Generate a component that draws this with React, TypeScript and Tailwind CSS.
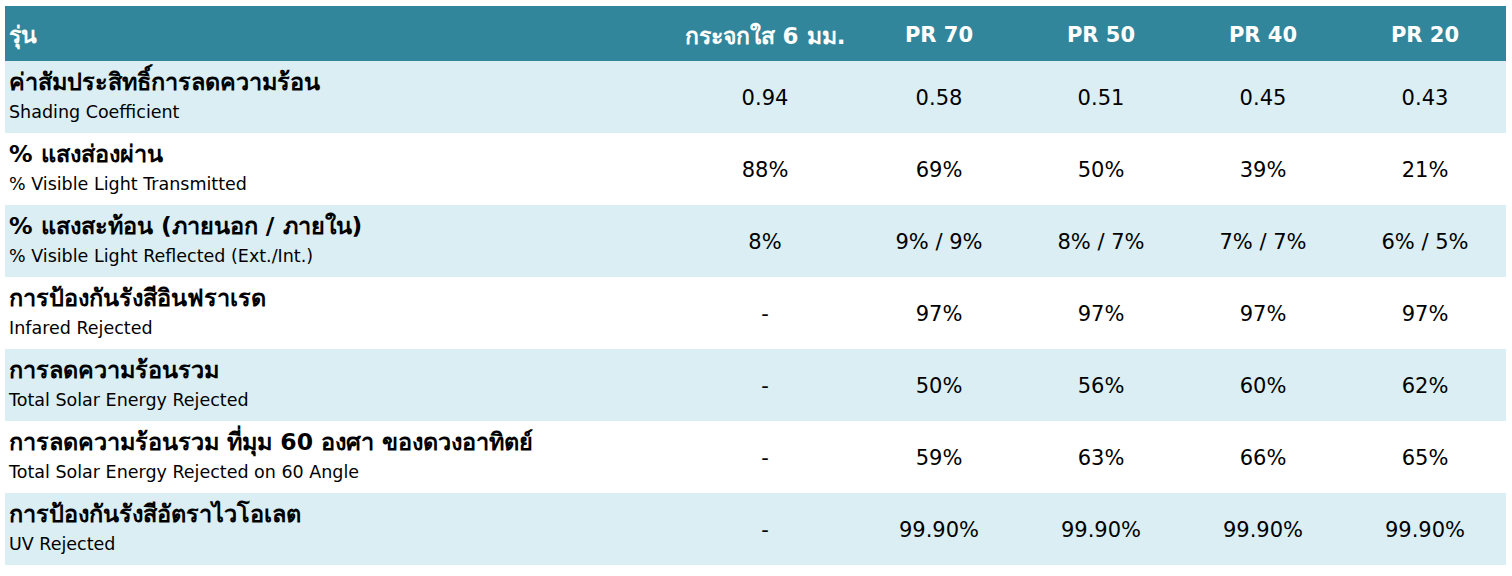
const FONT = "font-['DejaVu_Sans','Noto_Sans',Tahoma,sans-serif]";

const HEADERS = ["กระจกใส 6 มม.", "PR 70", "PR 50", "PR 40", "PR 20"];

const ROWS: { th: string; en: string; values: string[] }[] = [
  {
    th: "ค่าสัมประสิทธิ์การลดความร้อน",
    en: "Shading Coefficient",
    values: ["0.94", "0.58", "0.51", "0.45", "0.43"],
  },
  {
    th: "% แสงส่องผ่าน",
    en: "% Visible Light Transmitted",
    values: ["88%", "69%", "50%", "39%", "21%"],
  },
  {
    th: "% แสงสะท้อน (ภายนอก / ภายใน)",
    en: "% Visible Light Reflected (Ext./Int.)",
    values: ["8%", "9% / 9%", "8% / 7%", "7% / 7%", "6% / 5%"],
  },
  {
    th: "การป้องกันรังสีอินฟราเรด",
    en: "Infared Rejected",
    values: ["-", "97%", "97%", "97%", "97%"],
  },
  {
    th: "การลดความร้อนรวม",
    en: "Total Solar Energy Rejected",
    values: ["-", "50%", "56%", "60%", "62%"],
  },
  {
    th: "การลดความร้อนรวม ที่มุม 60 องศา ของดวงอาทิตย์",
    en: "Total Solar Energy Rejected on 60 Angle",
    values: ["-", "59%", "63%", "66%", "65%"],
  },
  {
    th: "การป้องกันรังสีอัตราไวโอเลต",
    en: "UV Rejected",
    values: ["-", "99.90%", "99.90%", "99.90%", "99.90%"],
  },
];

export default function App() {
  return (
    <div className={`min-h-screen w-full bg-white px-[5px] pt-[6px] text-black ${FONT}`}>
      <div className="grid w-[1501px] grid-cols-[667px_186px_162px_162px_162px_162px]">
        {/* Header row */}
        <div className="flex h-[55px] items-center bg-[#31869b] pl-[4px] pt-[4px] text-[23px] font-bold text-white">
          รุ่น
        </div>
        {HEADERS.map((h, i) => (
          <div
            key={h}
            className={`flex h-[55px] items-center justify-center bg-[#31869b] pt-[5px] font-bold text-white ${
              i === 0 ? "text-[23px]" : "text-[21px]"
            }`}
          >
            {h}
          </div>
        ))}

        {ROWS.map((row, i) => (
          <Row
            key={row.en}
            bg={i % 2 === 0 ? "bg-[#daeef3]" : "bg-white"}
            th={row.th}
            en={row.en}
            values={row.values}
          />
        ))}
      </div>
    </div>
  );
}

function Row({
  bg,
  th,
  en,
  values,
}: {
  bg: string;
  th: string;
  en: string;
  values: string[];
}) {
  return (
    <>
      <div className={`flex h-[72px] flex-col justify-center pl-[4px] ${bg}`}>
        <span className="block text-[23.5px] font-bold leading-[30px]">{th}</span>
        <span className="block text-[17.5px] leading-[30px]">{en}</span>
      </div>
      {values.map((v, j) => (
        <div
          key={j}
          className={`flex h-[72px] items-center justify-center pt-[4px] text-[21px] ${bg}`}
        >
          {v}
        </div>
      ))}
    </>
  );
}
